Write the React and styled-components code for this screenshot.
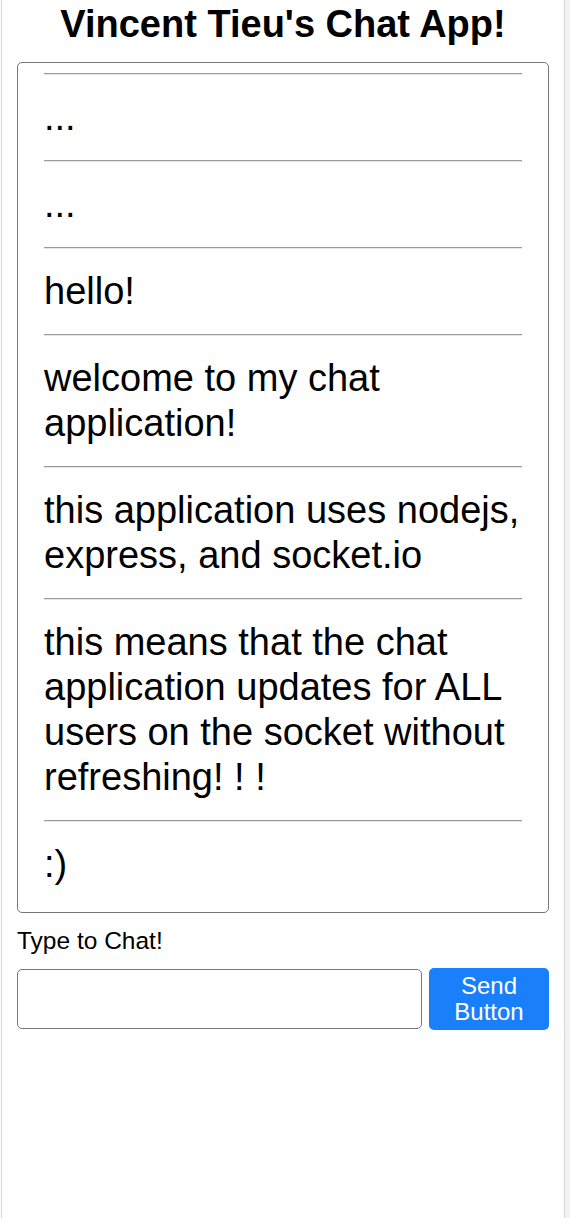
import React from 'react';
import styled, { createGlobalStyle } from 'styled-components';

const messages = [
  '...',
  '...',
  'hello!',
  'welcome to my chat application!',
  'this application uses nodejs, express, and socket.io',
  'this means that the chat application updates for ALL users on the socket without refreshing! ! !',
  ':)',
];

const GlobalStyle = createGlobalStyle`
  html, body {
    margin: 0;
    padding: 0;
  }
  body {
    background: linear-gradient(to right, #fff 565px, #f2f2f2 565px);
    font-family: "Liberation Sans", Arial, Helvetica, sans-serif;
    color: #000;
  }
`;

const App = () => {
  return (
    <>
      <GlobalStyle />
      <Frame>
        <Title>Vincent Tieu's Chat App!</Title>

        <ChatBox>
          <MessageList>
            {messages.map((msg, i) => (
              <Message key={i}>
                <Rule />
                <MessageText>{msg}</MessageText>
              </Message>
            ))}
          </MessageList>
        </ChatBox>

        <Label htmlFor="chat-input">Type to Chat!</Label>
        <InputRow>
          <ChatInput id="chat-input" type="text" />
          <SendButton type="button">Send Button</SendButton>
        </InputRow>
      </Frame>
    </>
  );
};

export default App;

const Frame = styled.div`
  box-sizing: border-box;
  width: 564px;
  min-height: 100vh;
  margin-left: 1px;
  padding: 0 15px;
  border-left: 1px solid #d6d6d6;
  border-right: 1px solid #d6d6d6;
  background: #fff;
  display: flex;
  flex-direction: column;
`;

const Title = styled.h1`
  margin: 0;
  padding-top: 3px;
  font-size: 38px;
  line-height: 42px;
  font-weight: 700;
  text-align: center;
`;

const ChatBox = styled.div`
  box-sizing: border-box;
  height: 851px;
  margin-top: 17px;
  border: 1px solid #767676;
  border-radius: 5px;
  overflow: hidden;
`;

const MessageList = styled.ul`
  list-style: none;
  margin: 0;
  padding: 10px 26px 5px;
`;

const Message = styled.li`
  display: flex;
  flex-direction: column;
`;

const Rule = styled.hr`
  margin: 0;
  height: 0;
  border: none;
  border-top: 1px solid #9a9a9a;
  border-bottom: 1px solid #e6e6e6;
`;

const MessageText = styled.p`
  margin: 20px 0;
  font-size: 38px;
  line-height: 45px;
`;

const Label = styled.label`
  margin-top: 14px;
  font-size: 24.5px;
  line-height: 28px;
`;

const InputRow = styled.div`
  display: flex;
  align-items: center;
  gap: 7px;
  margin-top: 13px;
`;

const ChatInput = styled.input`
  box-sizing: border-box;
  flex: 1;
  min-width: 0;
  height: 60px;
  padding: 0 10px;
  border: 1px solid #767676;
  border-radius: 5px;
  font-family: inherit;
  font-size: 24px;
  outline: none;
`;

const SendButton = styled.button`
  box-sizing: border-box;
  width: 120px;
  height: 62px;
  padding: 0 8px;
  border: none;
  border-radius: 5px;
  background: #1a7ffa;
  color: #fff;
  font-family: "Liberation Sans", Arial, Helvetica, sans-serif;
  font-size: 24px;
  line-height: 26px;
  cursor: pointer;
`;
